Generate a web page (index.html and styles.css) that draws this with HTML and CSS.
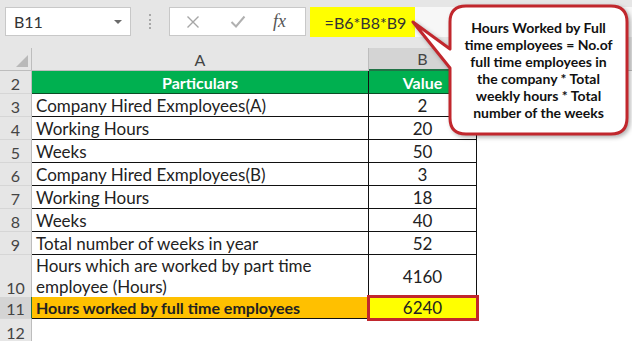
FILE: index.html
```html
<!DOCTYPE html>
<html>
  <head>
    <title>Hours worked</title>
    <link rel="stylesheet" href="styles.css">
  </head>
  <body>
    <div class="formula-bar">
      <div class="name-box">
        <span>B11</span>
        <span class="caret"></span>
      </div>
      <div class="grip"></div>
      <div class="fx-box">
        <svg class="fx-icon" width="14" height="14" viewBox="0 0 14 14">
          <path d="M1.5 1.5 L12.5 12.5 M12.5 1.5 L1.5 12.5" stroke="#a6a6a6" stroke-width="1.4" fill="none"/>
        </svg>
        <svg class="fx-icon" width="16" height="13" viewBox="0 0 16 13">
          <path d="M1.5 7 L6 11.5 L14.5 1.5" stroke="#b0b0b0" stroke-width="2" fill="none"/>
        </svg>
        <span class="fx">fx</span>
      </div>
      <div class="formula-input">
        <span class="formula-hl">=B6*B8*B9</span>
      </div>
    </div>

    <div class="sheet">
      <div class="row head">
        <div class="rh corner"><span class="tri"></span></div>
        <div class="ch">A</div>
        <div class="ch sel">B</div>
        <div class="ch rest"></div>
      </div>
      <div class="row">
        <div class="rh">2</div>
        <div class="cell a green">Particulars</div>
        <div class="cell b green">Value</div>
      </div>
      <div class="row">
        <div class="rh">3</div>
        <div class="cell a">Company Hired Exmployees(A)</div>
        <div class="cell b">2</div>
      </div>
      <div class="row">
        <div class="rh">4</div>
        <div class="cell a">Working Hours</div>
        <div class="cell b">20</div>
      </div>
      <div class="row">
        <div class="rh">5</div>
        <div class="cell a">Weeks</div>
        <div class="cell b">50</div>
      </div>
      <div class="row">
        <div class="rh">6</div>
        <div class="cell a">Company Hired Exmployees(B)</div>
        <div class="cell b">3</div>
      </div>
      <div class="row">
        <div class="rh">7</div>
        <div class="cell a">Working Hours</div>
        <div class="cell b">18</div>
      </div>
      <div class="row">
        <div class="rh">8</div>
        <div class="cell a">Weeks</div>
        <div class="cell b">40</div>
      </div>
      <div class="row">
        <div class="rh">9</div>
        <div class="cell a">Total number of weeks in year</div>
        <div class="cell b">52</div>
      </div>
      <div class="row tall">
        <div class="rh">10</div>
        <div class="cell a wrap">Hours which are worked by part time employee (Hours)</div>
        <div class="cell b">4160</div>
      </div>
      <div class="row short">
        <div class="rh sel-row">11</div>
        <div class="cell a orange">Hours worked by full time employees</div>
        <div class="cell b active">6240</div>
      </div>
      <div class="row last">
        <div class="rh">12</div>
      </div>
    </div>

    <!-- callout over the sheet -->
    <svg class="callout-shape" width="632" height="160" viewBox="0 0 632 160">
      <path d="M466 6 H611 Q627 6 627 22 V118 Q627 134 611 134 H466 Q450 134 450 118 V68 L413 22 L450 49 V22 Q450 6 466 6 Z"
            fill="#fff" stroke="#c1272d" stroke-width="3" stroke-linejoin="round"/>
    </svg>
    <div class="callout-text">
      Hours Worked by Full<br>
      time employees = No.of<br>
      full time employees in<br>
      the company * Total<br>
      weekly hours * Total<br>
      number of the weeks
    </div>
  </body>
</html>
```

FILE: styles.css
```css
body {
  margin: 0;
  width: 632px;
  height: 341px;
  overflow: hidden;
  background: #fff;
  font-family: Lato, "Liberation Sans", sans-serif;
  color: #222;
  position: relative;
}

/* formula bar */
.formula-bar {
  display: flex;
  height: 48px;
  padding-top: 7px;
  box-sizing: border-box;
  background: #e6e6e6;
}
.name-box {
  margin-left: 5px;
  width: 126px;
  height: 29px;
  box-sizing: border-box;
  background: #fff;
  border: 1px solid #c8c8c8;
  display: flex;
  align-items: center;
  justify-content: space-between;
  padding: 0 8px 0 8px;
  font-size: 16px;
  color: #333;
}
.caret {
  width: 0;
  height: 0;
  border-left: 4px solid transparent;
  border-right: 4px solid transparent;
  border-top: 4px solid #6a6a6a;
}
.grip {
  width: 38px;
  display: flex;
  justify-content: center;
}
.grip::before {
  content: "";
  margin-top: 7px;
  height: 15px;
  border-left: 2px dotted #a8a8a8;
}
.fx-box {
  width: 137px;
  height: 29px;
  box-sizing: border-box;
  background: #fff;
  border: 1px solid #c8c8c8;
  display: flex;
  align-items: center;
  padding-left: 16px;
  gap: 30px;
}
.fx {
  font-family: "Liberation Serif", serif;
  font-style: italic;
  font-size: 18px;
  color: #555;
  margin-left: -3px;
}
.formula-input {
  flex: 1;
  margin-left: 4px;
  height: 30px;
  background: #f7f7f7;
  display: flex;
}
.formula-hl {
  width: 105px;
  background: #ffff00;
  display: flex;
  align-items: center;
  justify-content: center;
  font-size: 16px;
  color: #333;
  padding-left: 6px;
  box-sizing: border-box;
}

/* sheet */
.row {
  display: grid;
  grid-template-columns: 32px 337px 108px 1fr;
  height: 23px;
  font-size: 17px;
}
.row.tall { height: 42px; }
.row.short { height: 22px; }
.row.last { height: 24px; }
.rh {
  background: #e6e6e6;
  border-right: 1px solid #bdbdbd;
  border-bottom: 1px solid #d6d6d6;
  box-sizing: border-box;
  display: flex;
  align-items: flex-end;
  justify-content: center;
  font-size: 16px;
  color: #444;
}
.rh.sel-row {
  background: #d4d4d4;
  border-right: 1px solid #217346;
}
.head .rh, .ch {
  border-bottom: 1px solid #bdbdbd;
}
.corner {
  position: relative;
}
.tri {
  position: absolute;
  right: 3px;
  bottom: 3px;
  width: 0;
  height: 0;
  border-left: 12px solid transparent;
  border-bottom: 12px solid #b9b9b9;
}
.ch {
  background: #e6e6e6;
  border-right: 1px solid #bdbdbd;
  box-sizing: border-box;
  display: flex;
  align-items: center;
  justify-content: center;
  font-size: 16px;
  color: #444;
}
.ch.sel {
  background: #d4d4d4;
  border-bottom: 2px solid #217346;
}
.ch.rest {
  border-right: none;
}
.cell {
  box-sizing: border-box;
  border-right: 1px solid #111;
  border-bottom: 1px solid #111;
  display: flex;
  align-items: center;
  white-space: nowrap;
}
.cell.a {
  padding-left: 4px;
}
.cell.b {
  justify-content: center;
}
.cell.wrap {
  white-space: normal;
  line-height: 21px;
  padding-right: 30px;
}
.green {
  background: #00b050;
  color: #fff;
  font-weight: bold;
  font-size: 16px;
  justify-content: center;
  border-bottom-color: #0c4d27;
}
.cell.a.green {
  padding-left: 0;
}
.orange {
  background: #ffc000;
  font-weight: bold;
  font-size: 16px;
}
.active {
  background: #ffff00;
  outline: 3px solid #c1272d;
  outline-offset: -1px;
  position: relative;
}

/* callout */
.callout-shape {
  position: absolute;
  left: 0;
  top: 0;
  filter: drop-shadow(2px 2px 2px rgba(0, 0, 0, 0.3));
}
.callout-text {
  position: absolute;
  left: 452px;
  top: 6px;
  width: 173px;
  height: 128px;
  display: flex;
  align-items: center;
  justify-content: center;
  text-align: center;
  font-size: 14px;
  line-height: 17px;
  font-weight: bold;
  color: #111;
}
```
